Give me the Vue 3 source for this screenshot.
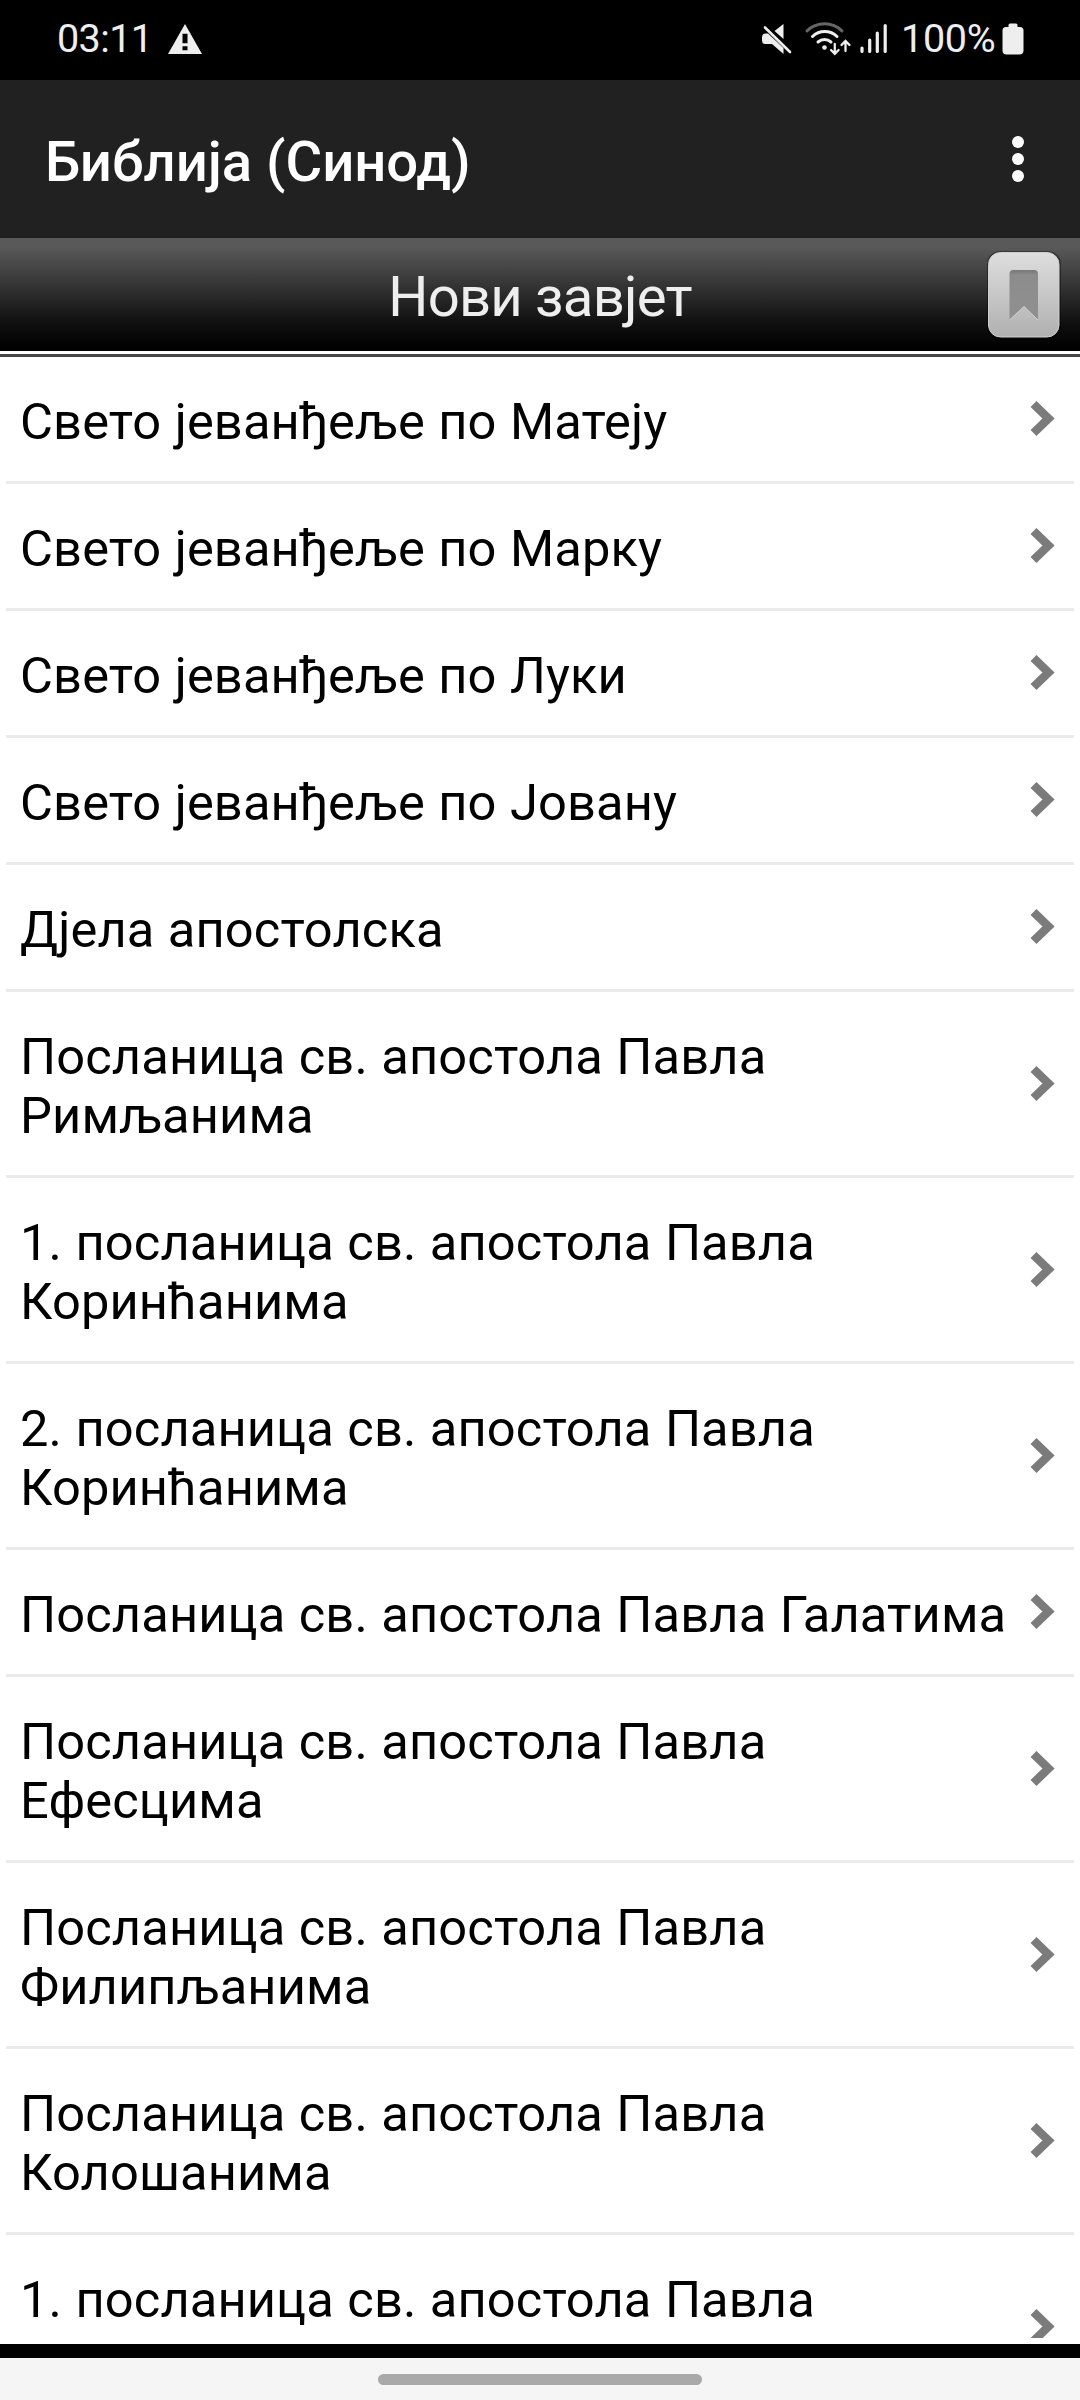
<script setup>
const books = [
  'Свето јеванђеље по Матеју',
  'Свето јеванђеље по Марку',
  'Свето јеванђеље по Луки',
  'Свето јеванђеље по Јовану',
  'Дјела апостолска',
  'Посланица св. апостола Павла Римљанима',
  '1. посланица св. апостола Павла Коринћанима',
  '2. посланица св. апостола Павла Коринћанима',
  'Посланица св. апостола Павла Галатима',
  'Посланица св. апостола Павла Ефесцима',
  'Посланица св. апостола Павла Филипљанима',
  'Посланица св. апостола Павла Колошанима',
  '1. посланица св. апостола Павла',
]
</script>

<template>
  <div class="screen">
    <div class="status">
      <span class="time">03:11</span>
      <svg class="warn" width="34" height="30" viewBox="0 0 34 31" preserveAspectRatio="none">
        <path d="M17 0 34 31H0Z" fill="#eee" />
        <path d="M14.500 10h5v10h-5zM14.500 23h5v4h-5z" fill="#000" />
      </svg>
      <svg class="icons" width="128" height="36" viewBox="760 20 128 36" fill="none" stroke-linecap="round">
        <path d="M774.500 31 783.500 24v15z" fill="#eee" />
        <path d="M762 37q0-3.500 3.500-3.500h2.500L783.500 48v6L772 44h-6.500q-3.500 0-3.500-3.500z" fill="#eee" />
        <path d="M765 27.500 790 52" stroke="#eee" stroke-width="2.600" />
        <path d="M807 31a25 25 0 0 1 35 0" stroke="#666" stroke-width="3" />
        <path d="M812.500 36.500a17.500 17.500 0 0 1 24.500 0" stroke="#eee" stroke-width="3" />
        <path d="M818 42a10 10 0 0 1 13 0" stroke="#eee" stroke-width="3" />
        <circle cx="824.500" cy="47.500" r="2.300" fill="#eee" />
        <path d="M834.800 44v9M831 50l3.800 3.800 3.800-3.800M845.500 51v-9M841.500 45l4-4 4 4" stroke="#eee" stroke-width="2.300" />
        <path d="M862 48v3.500M869.700 40v11.500M877.300 33v18.500M885.200 25.500v26" stroke="#eee" stroke-width="3.200" />
      </svg>
      <span class="percent">100%</span>
      <svg class="battery" width="22" height="32" viewBox="0 0 22 32">
        <path d="M6.500 4V2q0-1.500 1.500-1.500h6q1.500 0 1.500 1.500v2H18q3.500 0 3.500 3.500v20q0 4-4 4h-13q-4 0-4-4v-20Q.500 4 4 4z" fill="#eee" />
      </svg>
    </div>

    <header class="appbar">
      <h1>Библија (Синод)</h1>
      <div class="menu"><i /><i /><i /></div>
    </header>

    <div class="section">
      <span class="section-title">Нови завјет</span>
      <svg class="bookmark" width="76" height="90" viewBox="0 0 76 90">
        <defs>
          <linearGradient id="plate" x1="0" y1="0" x2="0" y2="1">
            <stop offset="0" stop-color="#dedede" />
            <stop offset="1" stop-color="#b0b0b0" />
          </linearGradient>
          <linearGradient id="ribbon" x1="0" y1="0" x2="0" y2="1">
            <stop offset="0" stop-color="#777" />
            <stop offset=".1" stop-color="#8c8c8c" />
            <stop offset="1" stop-color="#909090" />
          </linearGradient>
        </defs>
        <rect x="1" y="1" width="74" height="89" rx="13" fill="#000" opacity=".35" />
        <rect x="2.500" y="2.500" width="70.500" height="84.500" rx="12" fill="url(#plate)" stroke="#d0d0d0" stroke-width="1" />
        <path d="M23.500 70V24q0-4 4-4h20.500q4 0 4 4v46L38 56.500z" fill="url(#ribbon)" />
        <path d="M23.500 70 38 56.500 52 70" fill="none" stroke="#cfcfcf" stroke-width="1" />
      </svg>
    </div>
    <div class="rule" />

    <div class="list">
      <div v-for="book in books" :key="book" class="row">
        <span class="name">{{ book }}</span>
        <svg class="chevron" width="28" height="40" viewBox="0 0 28 40">
          <path d="M4.500 5 19.500 19.500 4.500 34" fill="none" stroke="#7b7b7b" stroke-width="8.500" />
        </svg>
      </div>
    </div>

    <div class="edge" />
    <div class="nav"><div class="pill" /></div>
  </div>
</template>

<style>
body {
  margin: 0;
}
</style>

<style scoped>
.screen {
  width: 1080px;
  height: 2400px;
  display: flex;
  flex-direction: column;
  overflow: hidden;
  background: #fff;
  font-family: Roboto, sans-serif;
}
.screen > * {
  flex: none;
}
.status {
  height: 80px;
  background: #000;
  color: #eee;
  display: flex;
  align-items: flex-start;
  box-sizing: border-box;
  padding-left: 57px;
  font-size: 39.5px;
  line-height: 46px;
}
.time {
  width: 111px;
  margin-top: 16px;
  letter-spacing: -0.6px;
}
.warn {
  margin-top: 24px;
}
.icons {
  margin: 20px 0 0 558px;
}
.percent {
  width: 101px;
  margin: 16px 0 0 13px;
  letter-spacing: -0.3px;
}
.battery {
  margin-top: 23px;
}
.appbar {
  height: 158px;
  background: #212121;
  display: flex;
  align-items: center;
  justify-content: space-between;
  box-sizing: border-box;
  padding: 0 56px 0 45px;
}
h1 {
  margin: 6px 0 0;
  color: #fff;
  font-size: 56.25px;
  line-height: 66px;
  font-weight: 500;
  letter-spacing: -0.05px;
}
.menu {
  display: flex;
  flex-direction: column;
  gap: 5px;
}
.menu i {
  width: 12px;
  height: 12px;
  border-radius: 50%;
  background: #fff;
}
.section {
  height: 113px;
  display: flex;
  justify-content: flex-end;
  background: linear-gradient(#595959 0%, #595959 8%, #101010 75%, #000 98%);
}
.section-title {
  width: 1080px;
  margin-right: -94px;
  padding-top: 26px;
  text-align: center;
  color: #eee;
  font-size: 56.25px;
  line-height: 66px;
  letter-spacing: -0.8px;
}
.bookmark {
  flex: none;
  margin: 12px 18px 0 0;
}
.rule {
  height: 3px;
  margin-top: 3px;
  background: #464646;
}
.list {
  height: 1981px;
  margin: 0 6px 6px;
  overflow: hidden;
}
.row {
  display: flex;
  align-items: center;
  justify-content: space-between;
  border-bottom: 3px solid #ebebeb;
  padding: 0 17px 0 14px;
}
.row:last-child {
  min-height: 183px;
  align-items: flex-start;
}
.row:last-child .chevron {
  margin-top: 72px;
}
.name {
  width: 990px;
  padding: 35px 0 30px;
  color: #000;
  font-size: 50.625px;
  line-height: 59px;
  letter-spacing: 0.13px;
  word-spacing: 0.7px;
}
.chevron {
  flex: none;
}
.edge {
  height: 14px;
  background: #000;
}
.nav {
  height: 42px;
  background: #f5f5f5;
  display: flex;
  justify-content: center;
}
.pill {
  width: 324px;
  height: 11px;
  margin-top: 16px;
  border-radius: 6px;
  background: #a9a9a9;
}
</style>
